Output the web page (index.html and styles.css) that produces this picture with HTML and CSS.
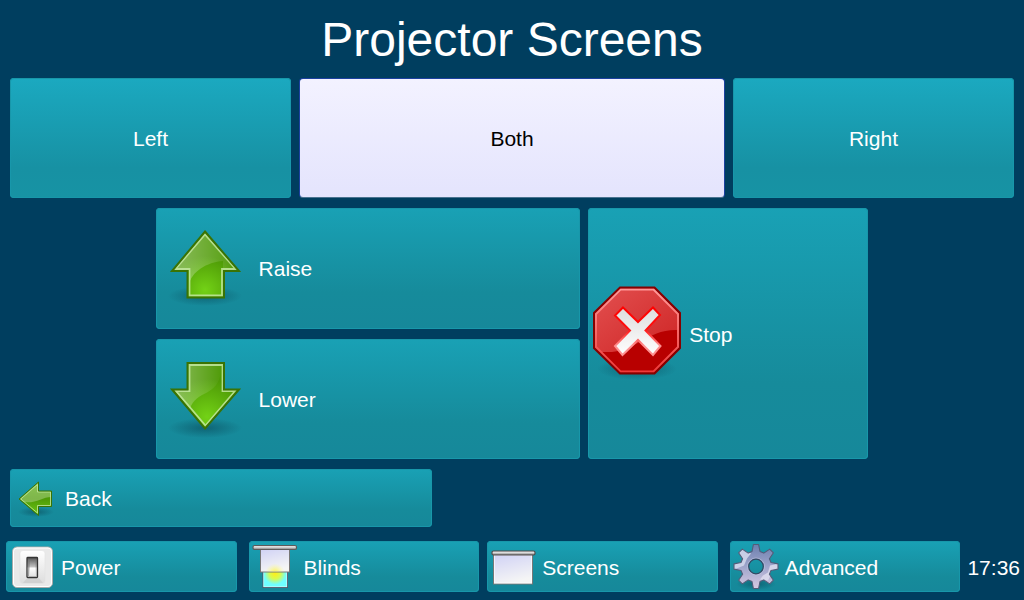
FILE: index.html
```html
<!DOCTYPE html>
<html lang="en">
<head>
<meta charset="utf-8">
<meta name="viewport" content="width=device-width, initial-scale=1">
<title>Projector Screens</title>
<link rel="stylesheet" href="styles.css">
</head>
<body>
<main class="panel">
  <h1 class="title">Projector Screens</h1>
  <div class="targets">
    <button type="button" class="btn btn-center" aria-pressed="false"><span class="label">Left</span></button>
    <button type="button" class="btn btn-center btn-selected" aria-pressed="true"><span class="label">Both</span></button>
    <button type="button" class="btn btn-center" aria-pressed="false"><span class="label">Right</span></button>
  </div>
  <div class="motion">
    <button type="button" class="btn">
      <svg class="icon-large" viewBox="0 0 96 96" aria-hidden="true">
        <defs>
          <radialGradient id="green-up" gradientUnits="userSpaceOnUse" cx="48" cy="70" r="34"><stop offset="0" stop-color="#73d216"/><stop offset="1" stop-color="#4e9a06"/></radialGradient>
          <linearGradient id="gloss" x1="0" y1="0" x2="1" y2="0"><stop offset="0" stop-color="#fff" stop-opacity=".35"/><stop offset="1" stop-color="#fff" stop-opacity=".02"/></linearGradient>
          <radialGradient id="shadow"><stop offset="0" stop-color="#052f40" stop-opacity=".42"/><stop offset="1" stop-color="#052f40" stop-opacity="0"/></radialGradient>
        </defs>
        <ellipse cx="48" cy="76" rx="37" ry="10" fill="url(#shadow)"/>
        <path d="M48 11.500 82 50.500H67V77H30.500V50.500H15Z" fill="url(#green-up)"/>
        <path d="M48 12 81 50H66V41C50 42 34 52 32 65V50H16Z" fill="url(#gloss)"/>
        <path d="M48 14.500 78.500 49H65V75.500H32.500V49H18.500Z" fill="none" stroke="#c3e8a0" stroke-opacity=".85" stroke-width="1.800"/>
        <path d="M48 11.500 82 51H67V77.500H30.500V51H15Z" fill="none" stroke="#3a7304" stroke-width="2"/>
      </svg>
      <span class="label">Raise</span>
    </button>
    <button type="button" class="btn btn-tall">
      <svg class="icon-large" viewBox="0 0 96 96" aria-hidden="true">
        <defs>
          <linearGradient id="cross" x1="0" y1="0" x2="0" y2="1"><stop offset="0" stop-color="#ddd"/><stop offset="1" stop-color="#fff"/></linearGradient>
          <linearGradient id="cross-edge" x1="0" y1="0" x2="0" y2="1"><stop offset="0" stop-color="#f00"/><stop offset=".45" stop-color="#ff1010"/><stop offset=".8" stop-color="#ff9090"/></linearGradient>
          <linearGradient id="stop-edge" x1="0" y1="0" x2="0" y2="1"><stop offset="0" stop-color="#ff9999"/><stop offset="1" stop-color="#ef3b3b"/></linearGradient>
          <linearGradient id="stop-gloss" x1="0" y1="0" x2="1" y2="1"><stop offset="0" stop-color="#e35050"/><stop offset="1" stop-color="#ce2525"/></linearGradient>
        </defs>
        <ellipse cx="48" cy="83" rx="40" ry="11" fill="url(#shadow)"/>
        <path d="M31 1.500H65.500L91 27V62L65.500 87.500H31L5 62V27Z" fill="#b80000"/>
        <path d="M31 2H65.500L90 27V44C58 42 47 67 16 66H9L5 61V27Z" fill="url(#stop-gloss)"/>
        <path d="M31.500 3.500H64.500L89 28V61L64.500 85.500H31.500L7 61V28Z" fill="none" stroke="url(#stop-edge)" stroke-width="2"/>
        <path d="M31 1.500H65.500L91 27V62L65.500 87.500H31L5 62V27Z" fill="none" stroke="#860000" stroke-width="2"/>
        <path d="M34 21.500 49 36 64 21.500 71 29 56.500 44.500 71.500 60 64 69 49 54 33.500 69 26 60 41 44.500 26 29.500Z" fill="url(#cross)" stroke="url(#cross-edge)" stroke-width="2"/>
      </svg>
      <span class="label">Stop</span>
    </button>
    <button type="button" class="btn">
      <svg class="icon-large" viewBox="0 0 96 96" aria-hidden="true">
        <defs>
          <radialGradient id="green-down" gradientUnits="userSpaceOnUse" cx="50" cy="66" r="38"><stop offset="0" stop-color="#73d216"/><stop offset="1" stop-color="#4e9a06"/></radialGradient>
        </defs>
        <ellipse cx="48" cy="77" rx="37" ry="10" fill="url(#shadow)"/>
        <path d="M30.500 12H67V38H82L48 77.500 15 38H30.500Z" fill="url(#green-down)"/>
        <path d="M31 12H64V20C61 47 39 38 33 58L16 38H31Z" fill="url(#gloss)"/>
        <path d="M32.500 14H65.500V40H78L48.500 74.500 19 40H32.500Z" fill="none" stroke="#c3e8a0" stroke-opacity=".85" stroke-width="1.800"/>
        <path d="M30.500 12H67V38.500H82L48 77.500 15 38.500H30.500Z" fill="none" stroke="#3a7304" stroke-width="2"/>
      </svg>
      <span class="label">Lower</span>
    </button>
  </div>
  <button type="button" class="btn btn-back">
    <svg class="icon-small" viewBox="0 0 48 48" aria-hidden="true">
      <defs><linearGradient id="green-back" x1="0" y1="0" x2="0" y2="1"><stop offset="0" stop-color="#5eae12"/><stop offset=".5" stop-color="#4e9a06"/><stop offset="1" stop-color="#6cc916"/></linearGradient></defs>
      <ellipse cx="25" cy="38" rx="18" ry="5" fill="url(#shadow)"/>
      <path d="M8 25 27.500 8V17H40.500V32.500H27.500V41.500Z" fill="url(#green-back)"/>
      <path d="M8 25 27.500 8V17H40.500V23C31 23 25 30 12 28Z" fill="#fff" fill-opacity=".28"/>
      <path d="M9.800 25 26.500 10.500V18H39.500V31.500H26.500V39Z" fill="none" stroke="#c3e8a0" stroke-opacity=".8"/>
      <path d="M8 25 27.500 8V17H40.500V32.500H27.500V41.500Z" fill="none" stroke="#3a7304"/>
    </svg>
    <span class="label">Back</span>
  </button>
</main>
<footer class="bar">
  <nav class="tabs" aria-label="Sections">
    <div class="tab-pair">
      <button type="button" class="btn">
        <svg class="icon-small" viewBox="0 0 48 48" aria-hidden="true">
          <defs>
            <linearGradient id="plate" x1="0" y1="0" x2="0" y2="1"><stop offset="0" stop-color="#fff"/><stop offset="1" stop-color="#ddd"/></linearGradient>
            <linearGradient id="rocker" x1="0" y1="0" x2="0" y2="1"><stop offset="0" stop-color="#555"/><stop offset=".48" stop-color="#c5c5c5"/><stop offset=".52" stop-color="#fff"/><stop offset="1" stop-color="#ddd"/></linearGradient>
          </defs>
          <rect x="5.500" y="4" width="40" height="40.500" rx="4.500" fill="#e9e9e9" stroke="#aaa"/>
          <rect x="6.500" y="5" width="38" height="38.500" rx="3.500" fill="none" stroke="#fff"/>
          <rect x="13" y="7.500" width="25" height="33" rx="3" fill="url(#plate)" stroke="#e2e2e2" stroke-width=".6"/>
          <path d="M16 40 21 34H31L36 40Z" fill="#c4c4c4" fill-opacity=".5"/>
          <rect x="20" y="14.500" width="10.500" height="20" rx=".8" fill="url(#rocker)" stroke="#333" stroke-width="1.300"/>
          <path d="M21 17H23L22 33H21ZM29.500 17H28.500L29 33H29.500Z" fill="#777" fill-opacity=".6"/>
        </svg>
        <span class="label">Power</span>
      </button>
      <button type="button" class="btn">
        <svg class="icon-small" viewBox="0 0 48 48" aria-hidden="true">
          <defs>
            <radialGradient id="sun" gradientUnits="userSpaceOnUse" cx="25" cy="30.500" r="11"><stop offset="0" stop-color="#ffee18"/><stop offset=".5" stop-color="#d8fa50"/><stop offset="1" stop-color="#70ffff"/></radialGradient>
            <linearGradient id="rail" x1="0" y1="0" x2="0" y2="1"><stop offset="0" stop-color="#ddd"/><stop offset=".4" stop-color="#ddd"/><stop offset="1" stop-color="#777"/></linearGradient>
            <linearGradient id="sheet" x1="0" y1="0" x2=".3" y2="1"><stop offset="0" stop-color="#ced0f5"/><stop offset="1" stop-color="#f5f5f5"/></linearGradient>
            <radialGradient id="sun-haze" gradientUnits="userSpaceOnUse" cx="25" cy="30.500" r="10"><stop offset="0" stop-color="#fe0" stop-opacity=".8"/><stop offset="1" stop-color="#ff6" stop-opacity="0"/></radialGradient>
          </defs>
          <rect x="13" y="22" width="24.500" height="22.500" fill="url(#sun)" stroke="#556"/>
          <rect x="13.800" y="22" width="23" height="21.800" fill="none" stroke="#d8ffff" stroke-width=".6"/>
          <rect x="10.500" y="5" width="29" height="24" fill="url(#sheet)" stroke="#777"/>
          <rect x="13" y="18" width="24" height="10.500" fill="url(#sun-haze)"/>
          <rect x="3" y="2.500" width="43.500" height="4" rx="1.500" fill="url(#rail)" stroke="#5d5a5a" stroke-width="1.200"/>
        </svg>
        <span class="label">Blinds</span>
      </button>
    </div>
    <div class="tab-pair">
      <button type="button" class="btn">
        <svg class="icon-small" viewBox="0 0 48 48" aria-hidden="true">
          <rect x="5.500" y="10" width="39" height="31" fill="url(#sheet)" stroke="#777"/>
          <rect x="6.500" y="12" width="37" height="28" fill="none" stroke="#fff" stroke-opacity=".6"/>
          <rect x="4" y="8" width="43" height="4" rx="1.500" fill="url(#rail)" stroke="#504d4d" stroke-width="1.200"/>
        </svg>
        <span class="label">Screens</span>
      </button>
      <button type="button" class="btn">
        <svg class="icon-small" viewBox="0 0 48 48" aria-hidden="true">
          <defs>
            <linearGradient id="steel" x1="0" y1="0" x2="0" y2="1"><stop offset="0" stop-color="#6c7fae"/><stop offset=".5" stop-color="#9fa5cb"/><stop offset="1" stop-color="#d6c9e2"/></linearGradient>
            <clipPath id="gear-clip"><path d="M-4-15-2.600-22H2.600L4-15 7.800-13.400 13.700-17.400 17.400-13.700 13.400-7.800 15-4 22-2.600V2.600L15 4 13.400 7.800 17.400 13.700 13.700 17.400 7.800 13.400 4 15 2.600 22H-2.600L-4 15-7.800 13.400-13.700 17.400-17.400 13.700-13.400 7.800-15 4-22 2.600V-2.600L-15-4-13.400-7.800-17.400-13.700-13.700-17.400-7.800-13.400Z"/></clipPath>
          </defs>
          <ellipse cx="25" cy="41" rx="20" ry="6" fill="url(#shadow)"/>
          <g transform="translate(25 23.500)">
            <path fill-rule="evenodd" fill="url(#steel)" d="M-4-15-2.600-22H2.600L4-15 7.800-13.400 13.700-17.400 17.400-13.700 13.400-7.800 15-4 22-2.600V2.600L15 4 13.400 7.800 17.400 13.700 13.700 17.400 7.800 13.400 4 15 2.600 22H-2.600L-4 15-7.800 13.400-13.700 17.400-17.400 13.700-13.400 7.800-15 4-22 2.600V-2.600L-15-4-13.400-7.800-17.400-13.700-13.700-17.400-7.800-13.400ZM7.500 0A7.500 7.500 0 1 0-7.500 0 7.500 7.500 0 1 0 7.500 0Z"/>
            <g clip-path="url(#gear-clip)">
              <path d="M-19-19-10-18-5-13-9-8-12-1-22 3-23-4-15-5Z" fill="#d3d9ed" fill-opacity=".85"/>
              <path d="M23-3V4L16 6 12 14 4 13 7 9 12 6 14-1Z" fill="#dddced" fill-opacity=".85"/>
            </g>
            <path fill="none" stroke="#535c78" stroke-width="1.100" stroke-linejoin="round" d="M-4-15-2.600-22H2.600L4-15 7.800-13.400 13.700-17.400 17.400-13.700 13.400-7.800 15-4 22-2.600V2.600L15 4 13.400 7.800 17.400 13.700 13.700 17.400 7.800 13.400 4 15 2.600 22H-2.600L-4 15-7.800 13.400-13.700 17.400-17.400 13.700-13.400 7.800-15 4-22 2.600V-2.600L-15-4-13.400-7.800-17.400-13.700-13.700-17.400-7.800-13.400Z"/>
            <circle r="8.500" fill="none" stroke="#c0c4df" stroke-opacity=".6"/>
            <circle r="7.300" fill="none" stroke="#354862" stroke-width="1.200"/>
          </g>
        </svg>
        <span class="label">Advanced</span>
      </button>
    </div>
  </nav>
  <time class="clock label">17:36</time>
</footer>
</body>
</html>
```
FILE: styles.css
```css
* {
  box-sizing: border-box;
}

body {
  display: flex;
  flex-direction: column;
  min-height: 100vh;
  margin: 0;
  background: #003e5f;
  color: #fff;
  font: 21px/24px "Liberation Sans", Arial, sans-serif;
}

.panel {
  display: flex;
  flex: 1;
  flex-direction: column;
  gap: 10px;
  padding: 0 10px;
}

.title {
  margin: 0 0 -10px;
  padding: 12px 0 10px;
  font-size: 48px;
  font-weight: 400;
  line-height: 56px;
  text-align: center;
}

.targets {
  display: grid;
  flex: 120 1 0;
  grid-template-columns: 33fr 50fr 33fr;
  gap: 8px;
}

.motion {
  display: grid;
  flex: 251 1 0;
  grid-template-columns: 50fr 33fr;
  grid-template-rows: 1fr 1fr;
  gap: 10px 8px;
  width: 71%;
  margin: 0 auto;
}

.btn {
  display: flex;
  align-items: center;
  gap: 6px;
  min-width: 0;
  padding: 0 1px;
  border: 0;
  border-radius: 4px;
  background: linear-gradient(#19a1b5, #168b9b 70%, #16889a);
  box-shadow: inset 0 0 0 1px #1897aa;
  color: #fff;
  font: inherit;
  text-align: left;
}

.btn-center {
  justify-content: center;
  background: linear-gradient(#1ba9c0, #1791a3 75%, #1793a4);
}

.btn-selected {
  border: 1px solid #1c41a0;
  border-bottom-color: #4a7390;
  background: linear-gradient(#f3f2ff, #e4e4fd);
  box-shadow: none;
  color: #000;
}

.btn-tall {
  grid-row: span 2;
  gap: 4px;
}

.btn-back {
  flex: 58 1 0;
  width: 42%;
}

.label {
  padding-top: 2px;
}

.icon-large {
  flex: none;
  width: 96px;
  height: 96px;
}

.icon-small {
  flex: none;
  width: 48px;
  height: 48px;
}

.bar {
  display: flex;
  align-items: center;
  gap: 7px;
  padding: 14px 4px 8px 6px;
}

.tabs {
  display: flex;
  flex: 1;
  gap: 8px;
}

.tab-pair {
  display: grid;
  flex: 1;
  grid-template-columns: 1fr 1fr;
  gap: 12px;
}

.tab-pair .btn {
  height: 51px;
}
```
